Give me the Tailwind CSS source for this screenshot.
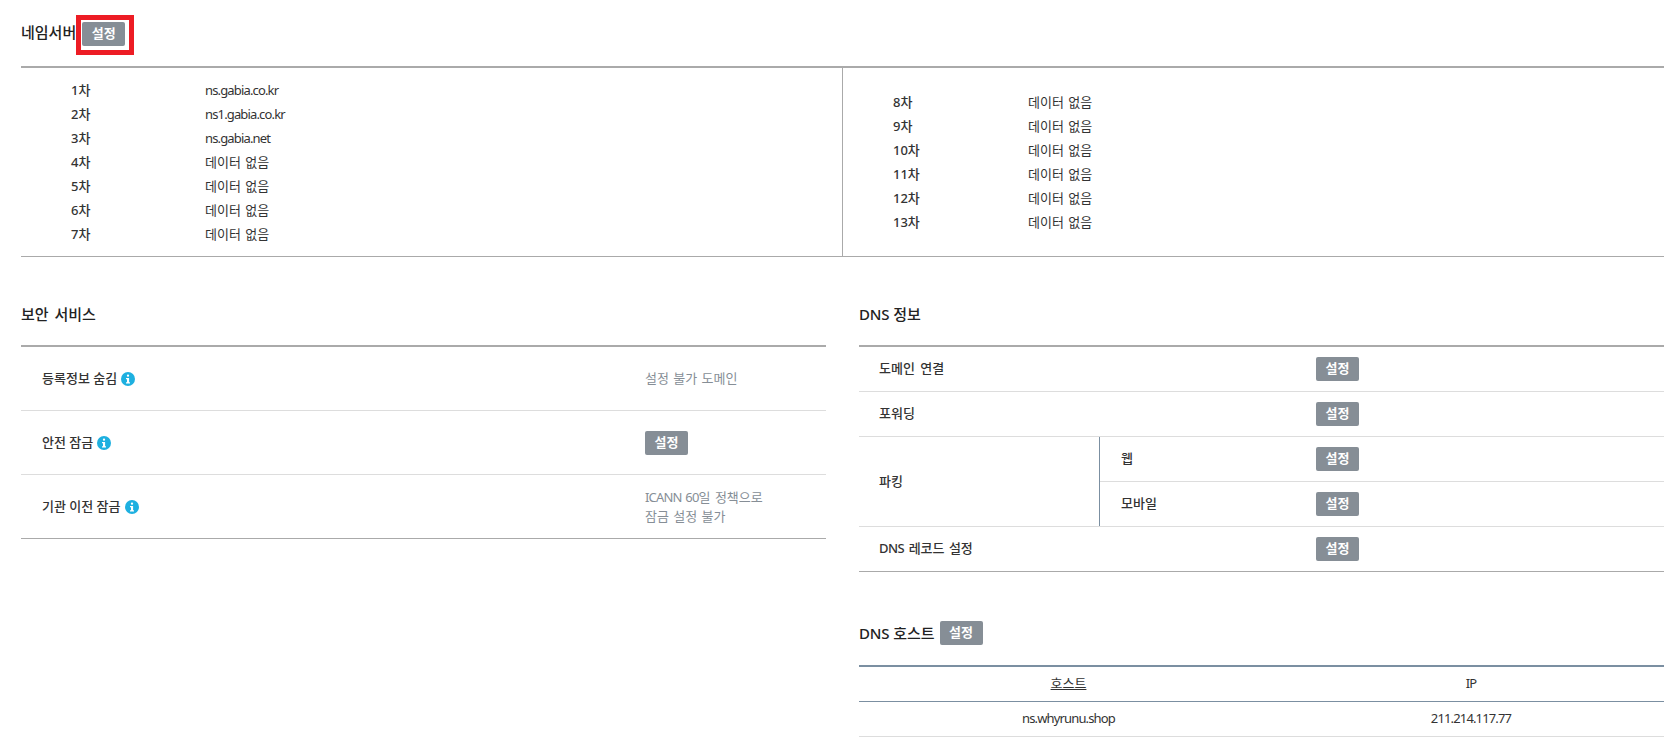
<!DOCTYPE html>
<html lang="ko">
<head>
    <meta charset="UTF-8" />
    <meta name="viewport" content="width=device-width, initial-scale=1.0" />
    <script src="https://cdn.jsdelivr.net/npm/@tailwindcss/browser@4"></script>
    <title>도메인 정보</title>
</head>
<body class="bg-white text-[13px] text-[#333] font-['Noto_Sans','Noto_Sans_CJK_KR',sans-serif]">
    <div class="pl-[21px] pr-[15px]">
        <!-- 네임서버 -->
        <div class="flex h-[66px] items-start pt-[15px]">
            <h2 class="mt-[7px] text-[15px] font-medium leading-[20px] text-[#222]">네임서버</h2>
            <div class="h-[40px] w-[58px] border-[5px] border-[#ed1c24] pt-[2px] pl-px">
                <button class="block w-[43px] h-[24px] rounded-[2px] bg-[#868e96] text-white text-[13px] font-bold">설정</button>
            </div>
        </div>
        <div class="flex h-[191px] border-t-2 border-b border-[#aaa]">
            <div class="w-[822px] border-r border-[#aaa] pt-[11px] [word-spacing:1px]">
                <div class="flex h-[24px] items-center"><span class="w-[51px] shrink-0 ml-[50px] font-medium">1차</span><span class="ml-[83px] tracking-[-0.85px]">ns.gabia.co.kr</span></div>
                <div class="flex h-[24px] items-center"><span class="w-[51px] shrink-0 ml-[50px] font-medium">2차</span><span class="ml-[83px] tracking-[-0.85px]">ns1.gabia.co.kr</span></div>
                <div class="flex h-[24px] items-center"><span class="w-[51px] shrink-0 ml-[50px] font-medium">3차</span><span class="ml-[83px] tracking-[-0.85px]">ns.gabia.net</span></div>
                <div class="flex h-[24px] items-center"><span class="w-[51px] shrink-0 ml-[50px] font-medium">4차</span><span class="ml-[83px]">데이터 없음</span></div>
                <div class="flex h-[24px] items-center"><span class="w-[51px] shrink-0 ml-[50px] font-medium">5차</span><span class="ml-[83px]">데이터 없음</span></div>
                <div class="flex h-[24px] items-center"><span class="w-[51px] shrink-0 ml-[50px] font-medium">6차</span><span class="ml-[83px]">데이터 없음</span></div>
                <div class="flex h-[24px] items-center"><span class="w-[51px] shrink-0 ml-[50px] font-medium">7차</span><span class="ml-[83px]">데이터 없음</span></div>
            </div>
            <div class="flex-1 pt-[23px] [word-spacing:1px]">
                <div class="flex h-[24px] items-center"><span class="w-[51px] shrink-0 ml-[50px] font-medium">8차</span><span class="ml-[84px]">데이터 없음</span></div>
                <div class="flex h-[24px] items-center"><span class="w-[51px] shrink-0 ml-[50px] font-medium">9차</span><span class="ml-[84px]">데이터 없음</span></div>
                <div class="flex h-[24px] items-center"><span class="w-[51px] shrink-0 ml-[50px] font-medium">10차</span><span class="ml-[84px]">데이터 없음</span></div>
                <div class="flex h-[24px] items-center"><span class="w-[51px] shrink-0 ml-[50px] font-medium">11차</span><span class="ml-[84px]">데이터 없음</span></div>
                <div class="flex h-[24px] items-center"><span class="w-[51px] shrink-0 ml-[50px] font-medium">12차</span><span class="ml-[84px]">데이터 없음</span></div>
                <div class="flex h-[24px] items-center"><span class="w-[51px] shrink-0 ml-[50px] font-medium">13차</span><span class="ml-[84px]">데이터 없음</span></div>
            </div>
        </div>

        <div class="flex">
            <!-- 보안 서비스 -->
            <div class="w-[805px]">
                <div class="flex h-[88px] items-end pb-[21px]">
                    <h2 class="text-[15px] font-medium leading-[20px] text-[#222] [word-spacing:2px]">보안 서비스</h2>
                </div>
                <div class="border-t-2 border-[#aaa]">
                    <div class="flex h-[64px] items-center border-b border-[#ddd]">
                        <div class="flex w-[624px] items-center pl-[21px] font-medium">등록정보 숨김
                            <svg class="ml-[4px] mt-px" width="14" height="14" viewBox="0 0 14 14"><circle cx="7" cy="7" r="7" fill="#1eb0e0"/><rect x="5.9" y="2.6" width="2.2" height="2.2" rx="1" fill="#fff"/><path d="M5 6h3.1v4.2H9v1.2H5v-1.2h1V7.2H5z" fill="#fff"/></svg>
                        </div>
                        <div class="text-[#868e96] [word-spacing:1px]">설정 불가 도메인</div>
                    </div>
                    <div class="flex h-[64px] items-center border-b border-[#ddd]">
                        <div class="flex w-[624px] items-center pl-[21px] font-medium">안전 잠금
                            <svg class="ml-[4px] mt-px" width="14" height="14" viewBox="0 0 14 14"><circle cx="7" cy="7" r="7" fill="#1eb0e0"/><rect x="5.9" y="2.6" width="2.2" height="2.2" rx="1" fill="#fff"/><path d="M5 6h3.1v4.2H9v1.2H5v-1.2h1V7.2H5z" fill="#fff"/></svg>
                        </div>
                        <button class="w-[43px] h-[24px] rounded-[2px] bg-[#868e96] text-white text-[13px] font-bold">설정</button>
                    </div>
                    <div class="flex h-[64px] items-center border-b border-[#aaa]">
                        <div class="flex w-[624px] items-center pl-[21px] font-medium">기관 이전 잠금
                            <svg class="ml-[4px] mt-px" width="14" height="14" viewBox="0 0 14 14"><circle cx="7" cy="7" r="7" fill="#1eb0e0"/><rect x="5.9" y="2.6" width="2.2" height="2.2" rx="1" fill="#fff"/><path d="M5 6h3.1v4.2H9v1.2H5v-1.2h1V7.2H5z" fill="#fff"/></svg>
                        </div>
                        <div class="leading-[19px] text-[#868e96] [word-spacing:1px]"><span class="tracking-[-0.8px]">ICANN 60</span>일 정책으로<br />잠금 설정 불가</div>
                    </div>
                </div>
            </div>

            <!-- DNS 정보 -->
            <div class="ml-[33px] flex-1">
                <div class="flex h-[88px] items-end pb-[21px]">
                    <h2 class="text-[15px] font-medium leading-[20px] text-[#222]"><span class="tracking-[-0.2px]">DNS</span> 정보</h2>
                </div>
                <div class="border-t-2 border-[#aaa]">
                    <div class="flex h-[45px] items-center border-b border-[#ddd] font-medium">
                        <div class="w-[457px] pl-[20px] [word-spacing:2px]">도메인 연결</div>
                        <button class="w-[43px] h-[24px] rounded-[2px] bg-[#868e96] text-white text-[13px] font-bold">설정</button>
                    </div>
                    <div class="flex h-[45px] items-center border-b border-[#ddd] font-medium">
                        <div class="w-[457px] pl-[20px]">포워딩</div>
                        <button class="w-[43px] h-[24px] rounded-[2px] bg-[#868e96] text-white text-[13px] font-bold">설정</button>
                    </div>
                    <div class="flex h-[90px] border-b border-[#ddd] font-medium">
                        <div class="flex w-[241px] items-center border-r border-[#7b8fa1] pl-[20px]">파킹</div>
                        <div class="flex-1">
                            <div class="flex h-[45px] items-center border-b border-[#ddd]">
                                <div class="w-[216px] pl-[21px]">웹</div>
                                <button class="w-[43px] h-[24px] rounded-[2px] bg-[#868e96] text-white text-[13px] font-bold">설정</button>
                            </div>
                            <div class="flex h-[44px] items-center">
                                <div class="w-[216px] pl-[21px]">모바일</div>
                                <button class="w-[43px] h-[24px] rounded-[2px] bg-[#868e96] text-white text-[13px] font-bold">설정</button>
                            </div>
                        </div>
                    </div>
                    <div class="flex h-[45px] items-center border-b border-[#aaa] font-medium">
                        <div class="w-[457px] pl-[20px] [word-spacing:1px]"><span class="tracking-[-0.5px]">DNS</span> 레코드 설정</div>
                        <button class="w-[43px] h-[24px] rounded-[2px] bg-[#868e96] text-white text-[13px] font-bold">설정</button>
                    </div>
                </div>

                <!-- DNS 호스트 -->
                <div class="flex h-[93px] items-start gap-[5px] pt-[49px]">
                    <h2 class="text-[15px] font-medium leading-[24px] text-[#222]"><span class="tracking-[-0.2px]">DNS</span> 호스트</h2>
                    <button class="w-[43px] h-[24px] rounded-[2px] bg-[#868e96] text-white text-[13px] font-bold">설정</button>
                </div>
                <div class="border-t-2 border-[#7b8fa1]">
                    <div class="flex h-[35px] items-center border-b border-[#7b8fa1] text-center">
                        <div class="w-[419px]"><a class="underline" href="#">호스트</a></div>
                        <div class="flex-1 tracking-[-0.85px]">IP</div>
                    </div>
                    <div class="flex h-[35px] items-center border-b border-[#ddd] text-center tracking-[-0.85px]">
                        <div class="w-[419px]">ns.whyrunu.shop</div>
                        <div class="flex-1">211.214.117.77</div>
                    </div>
                </div>
            </div>
        </div>
    </div>
</body>
</html>
